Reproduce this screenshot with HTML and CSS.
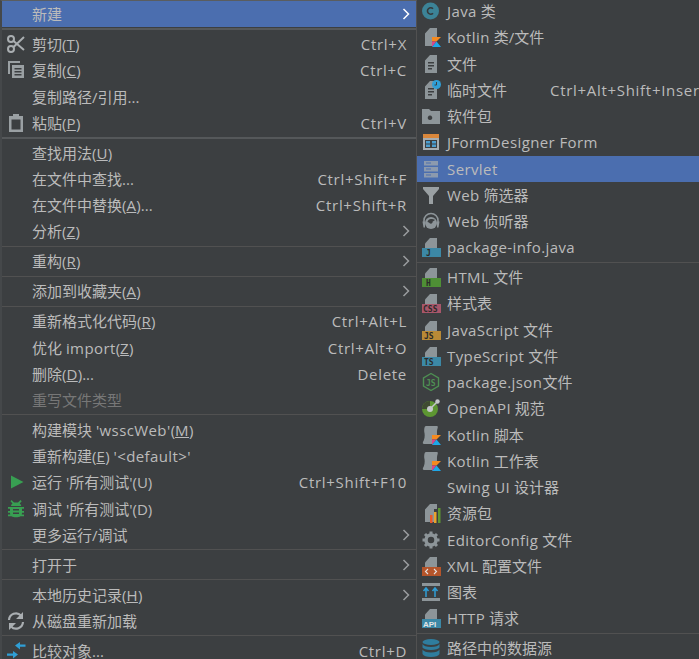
FILE: index.html
```html
<!DOCTYPE html>
<html lang="zh-CN">
<head>
<meta charset="utf-8">
<title>Menu</title>
<link rel="stylesheet" href="styles.css">
</head>
<body>
<svg class="defs" width="0" height="0" aria-hidden="true">
  <symbol id="arrow" viewBox="0 0 8 12"><path d="M1.500 1l5 5-5 5" fill="none" stroke="currentColor" stroke-width="1.500"/></symbol>
  <symbol id="page" viewBox="0 0 20 20"><path d="M9 1h7v10H4V6.500z" fill="#8d9599"/></symbol>
  <symbol id="kmark" viewBox="0 0 20 20">
    <path d="M11 10h9l-4.500 4.500H11z" fill="#f58a1f"/>
    <path d="M11 14.500h4.500L11 20z" fill="#d9478b"/>
    <path d="M15.500 14.500L20 20h-9z" fill="#1ea7e8"/>
  </symbol>
  <symbol id="kotlin" viewBox="0 0 20 20">
    <path d="M9 1h7v9h-5v9H4V6.500z" fill="#8d9599"/>
    <use href="#kmark"/>
  </symbol>
  <symbol id="kscript" viewBox="0 0 20 20">
    <path d="M5 1h11c1 0 1 1 .5 2.500-.7 2-.5 4-.5 6.500h-5v9H3c-1 0-1.500-1-1-2 1.500-2.500 2-6 1.500-9C3 6 3 1 5 1z" fill="#8d9599"/>
    <use href="#kmark"/>
  </symbol>
  <symbol id="doc" viewBox="0 0 20 20"><path d="M9 1h7v18H4V6.500zM7 8v1.500h6V8zM7 11v1.500h6V11zM7 14v1.500h4V14z" fill="#8d9599" fill-rule="evenodd"/></symbol>
</svg>
<div class="screen">
  <div class="menu left-menu">
    <div class="row selected"><span class="icon"></span><span class="label">新建</span><svg class="arrow"><use href="#arrow"/></svg></div>
    <div class="sep thick"></div>
    <div class="row">
      <span class="icon"><svg viewBox="0 0 20 20"><circle cx="5" cy="5" r="3" fill="none" stroke="#a9aeb1" stroke-width="2"/><circle cx="5" cy="15" r="3" fill="none" stroke="#a9aeb1" stroke-width="2"/><path d="M7 6.500L18 16M7 13.500L18 3" stroke="#a9aeb1" stroke-width="2" fill="none"/></svg></span>
      <span class="label">剪切(<u class="en">T</u>)</span><span class="key">Ctrl+X</span></div>
    <div class="row">
      <span class="icon"><svg viewBox="0 0 20 20"><path d="M2 1h12v2H4v11H2z" fill="#9aa0a3"/><path d="M6 5h12v13H6zM8.500 8v1.500h7V8zM8.500 11v1.500h7V11zM8.500 14v1.500h7V14z" fill="#9aa0a3" fill-rule="evenodd"/></svg></span>
      <span class="label">复制(<u class="en">C</u>)</span><span class="key">Ctrl+C</span></div>
    <div class="row"><span class="icon"></span><span class="label">复制路径/引用...</span></div>
    <div class="row">
      <span class="icon"><svg viewBox="0 0 20 20"><path d="M3 3h4V1h6v2h4v16H3zM5.500 6.500v10h9v-10z" fill="#9aa0a3" fill-rule="evenodd"/></svg></span>
      <span class="label">粘贴(<u class="en">P</u>)</span><span class="key">Ctrl+V</span></div>
    <div class="sep thick"></div>
    <div class="row"><span class="icon"></span><span class="label">查找用法(<u class="en">U</u>)</span></div>
    <div class="row"><span class="icon"></span><span class="label">在文件中查找...</span><span class="key">Ctrl+Shift+F</span></div>
    <div class="row"><span class="icon"></span><span class="label">在文件中替换(<u class="en">A</u>)...</span><span class="key">Ctrl+Shift+R</span></div>
    <div class="row"><span class="icon"></span><span class="label">分析(<u class="en">Z</u>)</span><svg class="arrow"><use href="#arrow"/></svg></div>
    <div class="sep"></div>
    <div class="row"><span class="icon"></span><span class="label">重构(<u class="en">R</u>)</span><svg class="arrow"><use href="#arrow"/></svg></div>
    <div class="sep"></div>
    <div class="row"><span class="icon"></span><span class="label">添加到收藏夹(<u class="en">A</u>)</span><svg class="arrow"><use href="#arrow"/></svg></div>
    <div class="sep"></div>
    <div class="row"><span class="icon"></span><span class="label">重新格式化代码(<u class="en">R</u>)</span><span class="key">Ctrl+Alt+L</span></div>
    <div class="row"><span class="icon"></span><span class="label">优化 <span class="en">import</span>(<u class="en">Z</u>)</span><span class="key">Ctrl+Alt+O</span></div>
    <div class="row"><span class="icon"></span><span class="label">删除(<u class="en">D</u>)...</span><span class="key">Delete</span></div>
    <div class="row disabled"><span class="icon"></span><span class="label">重写文件类型</span></div>
    <div class="sep"></div>
    <div class="row"><span class="icon"></span><span class="label">构建模块 <span class="en">'wsscWeb'</span>(<u class="en">M</u>)</span></div>
    <div class="row"><span class="icon"></span><span class="label">重新构建(<u class="en">E</u>) <span class="en">'&lt;default&gt;'</span></span></div>
    <div class="row">
      <span class="icon"><svg viewBox="0 0 20 20"><path d="M5 3.500l12.500 6.500L5 16.500z" fill="#389f52"/></svg></span>
      <span class="label">运行 '所有测试'(U)</span><span class="key">Ctrl+Shift+F10</span></div>
    <div class="row">
      <span class="icon"><svg viewBox="0 0 20 20"><path d="M5.500 1l2.500 2.500h4L14.500 1l1.200 1.200-2 2.300c.9.6 1.300 1.300 1.500 2.500H5c.2-1.200.6-1.900 1.500-2.500l-2-2.300zM2 8h16v1.800h-2V12h2v1.800h-2c0 .8-.1 1.300-.3 1.700H18V17.300h-3.500c-1.100.7-2.700 1-4.500 1s-3.400-.3-4.500-1H2V15.500h2.300c-.2-.4-.3-.9-.3-1.700H2V12h2V9.800H2zM7 10v1.500h6V10zM7 13.500V15h6v-1.500z" fill="#389f52" fill-rule="evenodd"/></svg></span>
      <span class="label">调试 '所有测试'(D)</span></div>
    <div class="row"><span class="icon"></span><span class="label">更多运行/调试</span><svg class="arrow"><use href="#arrow"/></svg></div>
    <div class="sep"></div>
    <div class="row"><span class="icon"></span><span class="label">打开于</span><svg class="arrow"><use href="#arrow"/></svg></div>
    <div class="sep"></div>
    <div class="row"><span class="icon"></span><span class="label">本地历史记录(<u class="en">H</u>)</span><svg class="arrow"><use href="#arrow"/></svg></div>
    <div class="row">
      <span class="icon"><svg viewBox="0 0 20 20"><path d="M3 9a7 7 0 0 1 12-4.500M17 11a7 7 0 0 1-12 4.500" fill="none" stroke="#a9aeb1" stroke-width="2.200"/><path d="M17 1v7h-7zM3 19v-7h7z" fill="#a9aeb1"/></svg></span>
      <span class="label">从磁盘重新加载</span></div>
    <div class="sep"></div>
    <div class="row">
      <span class="icon"><svg viewBox="0 0 20 20"><path d="M9 4.500L14 1v2.500h5.500v2.200H14V8.500zM12 13.500L7 10v2.500H1v2.200h6V17.500z" fill="#2f9fd6"/></svg></span>
      <span class="label">比较对象...</span><span class="key">Ctrl+D</span></div>
  </div>

  <div class="menu right-menu">
    <div class="row"><span class="icon"><svg viewBox="0 0 20 20"><circle cx="9.500" cy="10" r="8.500" fill="#3c8397"/><path d="M12 7.800A3.200 3.200 0 1 0 12 12.200" fill="none" stroke="#35393b" stroke-width="1.600"/></svg></span><span class="label"><span class="en">Java</span> 类</span></div>
    <div class="row"><span class="icon"><svg viewBox="0 0 20 20"><use href="#kotlin"/></svg></span><span class="label"><span class="en">Kotlin</span> 类/文件</span></div>
    <div class="row"><span class="icon"><svg viewBox="0 0 20 20"><use href="#doc"/></svg></span><span class="label">文件</span></div>
    <div class="row"><span class="icon"><svg viewBox="0 0 20 20"><use href="#doc"/><circle cx="15.500" cy="4.500" r="4.500" fill="#2f9fd6"/><path d="M15.500 2v3h-2" fill="none" stroke="#3c3f41"/></svg></span><span class="label">临时文件</span><span class="key scratch">Ctrl+Alt+Shift+Inser</span></div>
    <div class="row"><span class="icon"><svg viewBox="0 0 20 20"><path d="M1 3h7l2 2h9v13H1zM9 9.500a2.300 2.300 0 1 0 .01 0z" fill="#8d9599" fill-rule="evenodd"/></svg></span><span class="label">软件包</span></div>
    <div class="row"><span class="icon"><svg viewBox="0 0 20 20"><path d="M2 2h16v16H2z" fill="#a6adb1"/><path d="M2 2h16v4H2z" fill="#d9873b"/><path d="M4 8h12v8H4z" fill="#3c3f41"/><path d="M5 9h4v2.500H5zM11 9h4v2.500h-4zM5 12.500h4V15H5zM11 12.500h4V15h-4z" fill="#4a9dcf"/></svg></span><span class="label"><span class="en">JFormDesigner Form</span></span></div>
    <div class="row selected"><span class="icon"><svg viewBox="0 0 20 20"><path d="M3 2h14v4.500H3zM3 8h14v4.500H3zM3 14h14v4.500H3z" fill="#8c9aae"/><path d="M5 3.500h5v1H5zM5 9.500h5v1H5zM5 15.500h5v1H5z" fill="#4b6eaf"/></svg></span><span class="label"><span class="en">Servlet</span></span></div>
    <div class="row"><span class="icon"><svg viewBox="0 0 20 20"><path d="M2 2h16v2l-6 7v8H8v-8L2 4z" fill="#9aa0a3"/></svg></span><span class="label"><span class="en">Web</span> 筛选器</span></div>
    <div class="row"><span class="icon"><svg viewBox="0 0 20 20"><path d="M3 12v-2.500a7 7 0 0 1 14 0V12" fill="none" stroke="#8d9599" stroke-width="1.600"/><circle cx="10" cy="12" r="6" fill="#8d9599"/><path d="M10 8c-2 0-3.500 1.500-3.500 3 1 .5 2 .5 2.500 1.500 1.500.5 3-.5 2.500-1.800L14 9c-1-.8-2.500-1-4-1z" fill="#3c3f41"/><path d="M1.500 10.500h2.500v6H2.500zM16 10.500h2.500l-1 6H16z" fill="#8d9599"/></svg></span><span class="label"><span class="en">Web</span> 侦听器</span></div>
    <div class="row"><span class="icon"><svg viewBox="0 0 20 20"><use href="#page"/><rect x="1" y="11" width="19" height="9" fill="#3c88a6"/><text x="5" y="19" class="tag">J</text></svg></span><span class="label"><span class="en">package-info.java</span></span></div>
    <div class="sep"></div>
    <div class="row"><span class="icon"><svg viewBox="0 0 20 20"><use href="#page"/><rect x="1" y="11" width="19" height="9" fill="#4e8f35"/><text x="5" y="19" class="tag">H</text></svg></span><span class="label"><span class="en">HTML</span> 文件</span></div>
    <div class="row"><span class="icon"><svg viewBox="0 0 20 20"><use href="#page"/><rect x="1" y="11" width="19" height="9" fill="#a8566a"/><text x="2" y="19" class="tag">CSS</text></svg></span><span class="label">样式表</span></div>
    <div class="row"><span class="icon"><svg viewBox="0 0 20 20"><use href="#page"/><rect x="1" y="11" width="19" height="9" fill="#b98a36"/><text x="3" y="19" class="tag">JS</text></svg></span><span class="label"><span class="en">JavaScript</span> 文件</span></div>
    <div class="row"><span class="icon"><svg viewBox="0 0 20 20"><use href="#page"/><rect x="1" y="11" width="19" height="9" fill="#3c88a6"/><text x="3" y="19" class="tag">TS</text></svg></span><span class="label"><span class="en">TypeScript</span> 文件</span></div>
    <div class="row"><span class="icon"><svg viewBox="0 0 20 20"><path d="M10 1.500l7.500 4.300v8.400L10 18.500l-7.500-4.300V5.800z" fill="none" stroke="#4e8f53" stroke-width="1.400"/><text x="5" y="13.500" class="tag green">JS</text></svg></span><span class="label"><span class="en">package.json</span>文件</span></div>
    <div class="row"><span class="icon"><svg viewBox="0 0 20 20"><circle cx="9" cy="11" r="8" fill="#5d9632"/><path d="M9 11V3a8 8 0 0 0-8 8z" fill="#3f4a32"/><circle cx="9" cy="11" r="3" fill="#c4c8ca"/><path d="M9 11l7-7" stroke="#c4c8ca" stroke-width="1.500"/><circle cx="16.500" cy="3.500" r="2.200" fill="#c4c8ca"/></svg></span><span class="label"><span class="en">OpenAPI</span> 规范</span></div>
    <div class="row"><span class="icon"><svg viewBox="0 0 20 20"><use href="#kscript"/></svg></span><span class="label"><span class="en">Kotlin</span> 脚本</span></div>
    <div class="row"><span class="icon"><svg viewBox="0 0 20 20"><use href="#kscript"/></svg></span><span class="label"><span class="en">Kotlin</span> 工作表</span></div>
    <div class="row"><span class="icon"></span><span class="label"><span class="en">Swing UI</span> 设计器</span></div>
    <div class="row"><span class="icon"><svg viewBox="0 0 20 20"><path d="M9 1h7v5h-3v13H4V6.500z" fill="#8d9599"/><path d="M9 12h2.500v8H9z" fill="#e8582c"/><path d="M13 9h2.500v11H13z" fill="#e8a32c"/><path d="M17 5h2.500v15H17z" fill="#5d9632"/></svg></span><span class="label">资源包</span></div>
    <div class="row"><span class="icon"><svg viewBox="0 0 20 20"><circle cx="10" cy="10" r="5" fill="none" stroke="#8d9599" stroke-width="3.500"/><path d="M10 1.500v3M10 15.500v3M1.500 10h3M15.500 10h3M4 4l2.200 2.200M13.800 13.800L16 16M4 16l2.200-2.200M13.800 6.200L16 4" stroke="#8d9599" stroke-width="3"/></svg></span><span class="label"><span class="en">EditorConfig</span> 文件</span></div>
    <div class="row"><span class="icon"><svg viewBox="0 0 20 20"><use href="#page"/><rect x="1" y="11" width="19" height="9" fill="#b5552b"/><path d="M7 13l-2.500 2.500L7 18M13 13l2.500 2.500L13 18" fill="none" stroke="#e5e5e5" stroke-width="1.100"/></svg></span><span class="label"><span class="en">XML</span> 配置文件</span></div>
    <div class="row"><span class="icon"><svg viewBox="0 0 20 20"><path d="M1 1h18v3H1zM1 16h18v3H1z" fill="#8d9599"/><path d="M5 15V7M2.500 9L5 6l2.500 3M14 15V7M11.500 9L14 6l2.500 3" fill="none" stroke="#2f9fd6" stroke-width="1.500"/></svg></span><span class="label">图表</span></div>
    <div class="row"><span class="icon"><svg viewBox="0 0 20 20"><use href="#page"/><rect x="1" y="11" width="19" height="9" fill="#3c88a6"/><text x="2" y="19" class="tag light">API</text></svg></span><span class="label"><span class="en">HTTP</span> 请求</span></div>
    <div class="sep"></div>
    <div class="row"><span class="icon"><svg viewBox="0 0 20 20"><ellipse cx="10" cy="4" rx="8.500" ry="3" fill="#2f7d9e"/><path d="M1.500 6c1 2 4 3 8.500 3s7.500-1 8.500-3v3.500C17.500 11 14.500 12 10 12s-7.500-1-8.500-2.500zM1.500 11.500c1 2 4 3 8.500 3s7.500-1 8.500-3V16c-1 2-4 3-8.500 3S2.500 18 1.500 16z" fill="#2f7d9e"/></svg></span><span class="label">路径中的数据源</span></div>
  </div>
</div>
</body>
</html>
```

FILE: styles.css
```css
* { box-sizing: border-box; }
html, body { margin: 0; padding: 0; background: #3c3f41; }
.defs { position: absolute; }
.screen {
  width: 699px;
  height: 659px;
  overflow: hidden;
  display: flex;
  align-items: flex-start;
  background: #3c3f41;
  color: #bbbbbb;
  font: 15px/20px "Open Sans", "Noto Sans CJK SC", sans-serif;
}
.menu { flex: none; }
.left-menu {
  width: 417px;
  height: 659px;
  border-top: 1px solid #5a5d5f;
  border-left: 2px solid #45484a;
  border-right: 1px solid #515151;
}
.right-menu {
  width: 282px;
  margin-top: -2px;
}
.row {
  display: flex;
  align-items: center;
  white-space: nowrap;
}
.left-menu .row { height: 26.2px; padding: 0 6px 0 4px; }
.right-menu .row { height: 26.25px; padding-left: 4px; }
.selected { background: #4b6eaf; }
.disabled { color: #777777; }
.icon {
  flex: none;
  width: 20px;
  height: 20px;
  margin-right: 6px;
  display: block;
}
.icon svg { display: block; width: 20px; height: 20px; }
.label { flex: none; }
.en { letter-spacing: 0.4px; }
.key { margin-left: auto; padding-right: 3px; letter-spacing: 0.7px; }
.scratch { margin-left: 43px; padding-right: 0; }
.arrow { margin-left: auto; width: 8px; height: 12px; color: #9a9d9f; }
.selected .arrow { color: #ffffff; }
.sep { display: flex; align-items: center; }
.left-menu .sep { height: 3.85px; }
.right-menu .sep { height: 3.5px; }
.sep::before { content: ""; display: block; width: 100%; height: 1px; background: #515151; }
.sep.thick::before { height: 2px; background: #55585a; }
.tag { font: bold 8px "DejaVu Sans Mono", monospace; fill: #2b2b2b; }
.tag.green { fill: #4e8f53; }
.tag.light { fill: #e5e5e5; font-family: "Liberation Sans", sans-serif; }
```
